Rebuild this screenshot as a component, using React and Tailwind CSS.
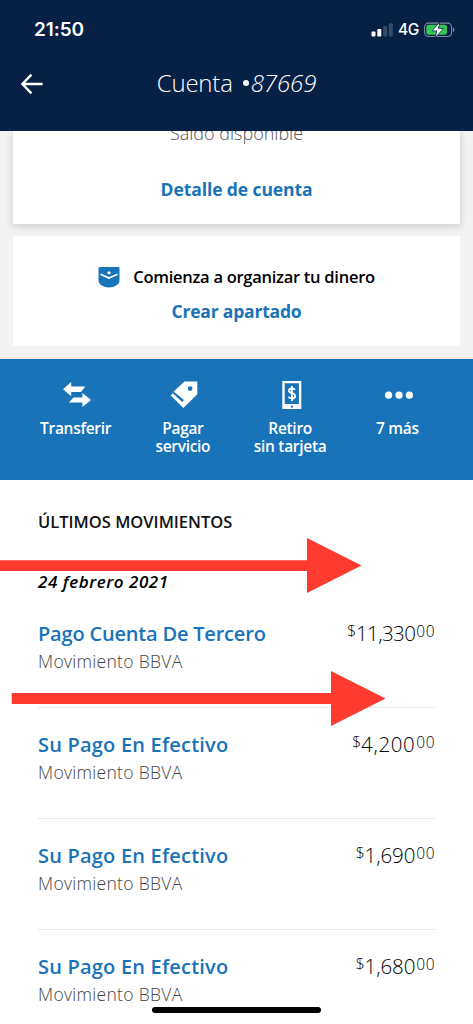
const movements = [
  { title: "Pago Cuenta De Tercero", amount: "11,330", titleClass: "tracking-[-0.19px]", amountClass: "tracking-[-0.6px]" },
  { title: "Su Pago En Efectivo", amount: "4,200", titleClass: "tracking-[0.2px]", amountClass: "tracking-[0.6px]" },
  { title: "Su Pago En Efectivo", amount: "1,690", titleClass: "tracking-[0.2px]", amountClass: "tracking-[-0.1px]" },
  { title: "Su Pago En Efectivo", amount: "1,680", titleClass: "tracking-[0.2px]", amountClass: "tracking-[-0.1px]" },
];

const StatusBar = () => (
  <div className="flex h-[58px] items-center justify-between pt-[2px] pl-[34px] pr-[18px] font-['Inter',sans-serif] text-white">
    <span className="text-[19px] leading-[24px] font-semibold tracking-[-0.1px]">21:50</span>
    <div className="flex items-center">
      <svg width="23" height="14" viewBox="0 0 23 14">
        <rect x="0.5" y="8.5" width="4" height="5" rx="1" fill="#fff" />
        <rect x="6.3" y="6" width="4" height="7.5" rx="1" fill="#fff" />
        <rect x="12.1" y="3" width="4" height="10.5" rx="1" fill="#354a6b" />
        <rect x="17.8" y="0.2" width="4" height="13.3" rx="1" fill="#354a6b" />
      </svg>
      <span className="ml-[4px] w-[22px] text-[15.5px] leading-[20px] font-medium tracking-[-0.4px]">4G</span>
      <svg className="ml-[4px]" width="31" height="18" viewBox="0 0 31 18">
        <rect x="0.6" y="2.1" width="27" height="13.4" rx="4" fill="none" stroke="#7d8b9f" strokeWidth="1.1" />
        <rect x="2.3" y="3.8" width="20.7" height="10" rx="2.4" fill="#35c759" />
        <path d="M29 6.6c1.9.6 1.9 4 0 4.6z" fill="#7d8b9f" />
        <path d="M15.800 .9L8 9.900h4.800l-1.700 7 8.500-9.500h-5.100z" fill="#fff" stroke="#072146" strokeWidth="0.8" />
      </svg>
    </div>
  </div>
);

const Header = () => (
  <header className="relative z-10 h-[131px] bg-[#072146] text-white">
    <StatusBar />
    <div className="grid h-[52px] grid-cols-[1fr_auto_1fr] items-center">
      <svg className="ml-[20px]" width="24" height="22" viewBox="0 0 24 22">
        <path d="M11.4 1.6L2.4 11l9 9.400M3 11h19.600" fill="none" stroke="#fff" strokeWidth="2.4" />
      </svg>
      <h1 className="-mt-[2px] flex h-[32px] items-center text-[24px] font-light leading-[32px]">
        <span className="w-[86px] tracking-[-0.2px]">Cuenta</span>
        <span className="mr-[2px] h-[6px] w-[6px] rounded-full bg-white" />
        <span className="italic tracking-[-0.1px]">87669</span>
      </h1>
      <span />
    </div>
  </header>
);

const SwapIcon = () => (
  <svg width="28" height="28" viewBox="0 0 28 28" fill="#fff">
    <path d="M0 8.300L8.200 1v4.500h14L18 10.900H8.200v4.400z" />
    <path d="M28 18.900L19.400 12v4.400H10.400L6 21.600h13.400v4.400z" />
  </svg>
);

const TagIcon = () => (
  <svg width="28" height="28" viewBox="0 0 28 28" fill="#fff">
    <path
      fillRule="evenodd"
      d="M14.500 .5H27.300V13.300L13.400 27 .7 14.500 2.700 12.300 12.200 21 14 19 3.600 10.500zM20.100 5.200a2.400 2.400 0 1 0 0 4.800 2.400 2.400 0 0 0 0-4.800z"
    />
  </svg>
);

const PhoneIcon = () => (
  <svg width="28" height="28" viewBox="0 0 28 28">
    <path fillRule="evenodd" fill="#fff" d="M4.300 0h19v28h-19zM6.700 2.300v20.800h14.200V2.300z" />
    <circle cx="13.800" cy="25.600" r="1.200" fill="#1973b8" />
    <path
      d="M17 8.800c-.7-1-1.800-1.300-3.100-1.300-1.700 0-2.900.8-2.900 2.300 0 3.300 6.100 1.600 6.100 5.100 0 1.700-1.400 2.500-3.200 2.500-1.400 0-2.600-.5-3.400-1.600M13.900 5v15.200"
      fill="none"
      stroke="#fff"
      strokeWidth="1.900"
    />
  </svg>
);

const DotsIcon = () => (
  <svg width="28" height="28" viewBox="0 0 28 28" fill="#fff">
    <circle cx="3.600" cy="14.200" r="3.600" />
    <circle cx="14" cy="14.200" r="3.600" />
    <circle cx="24.400" cy="14.200" r="3.600" />
  </svg>
);

const Action = ({ icon, children }) => (
  <div className="flex flex-1 flex-col items-center pt-[22px]">
    <div className="ml-[3px]">{icon}</div>
    <span className="mt-[10px] text-center text-[15.5px] font-semibold leading-[18px] tracking-[-0.3px] whitespace-pre-line">
      {children}
    </span>
  </div>
);

const Movement = ({ title, amount, titleClass, amountClass }) => (
  <li className="flex h-[111px] justify-between border-b border-[#e9e9e9] pt-[23px]">
    <div>
      <p className={`text-[20px] font-semibold leading-[28px] text-[#1973b8] ${titleClass}`}>{title}</p>
      <p className="-mt-px text-[17.5px] leading-[28px] font-light tracking-[0.3px] text-[#444]">Movimiento BBVA</p>
    </div>
    <div className="-mt-px flex items-start font-light text-black">
      <span className="text-[15.5px] leading-[25px]">$</span>
      <span className={`text-[20.5px] leading-[28px] ${amountClass}`}>{amount}</span>
      <span className="ml-[1px] text-[15.5px] leading-[25px] tracking-[0.5px]">00</span>
    </div>
  </li>
);

// Red markers that lie over the list
const Markers = () => (
  <svg className="absolute left-0 top-[530px]" width="473" height="200" viewBox="0 530 473 200" fill="#ff3b30">
    <path d="M0 560.200H307V538L361.500 565.500 307 593V571H0z" />
    <path d="M11.700 693H331V671L385.500 698.500 331 726V704H11.700z" />
  </svg>
);

export default function App() {
  return (
    <div className="relative h-[1024px] w-[473px] overflow-hidden bg-white font-['Open_Sans',sans-serif]">
      <Header />
      <section className="h-[228px] overflow-hidden border-b-2 border-[#fbeee6] bg-[#f3f3f3] px-[13px]">
        <div className="flex h-[93px] flex-col bg-white text-center shadow-[0_2px_8px_rgba(0,0,0,0.18)]">
          <p className="-mt-[10px] h-[26px] text-[18px] font-light leading-[24px] text-[#555]">Saldo disponible</p>
          <p className="pt-[30px] text-[17.5px] font-bold leading-[24px] tracking-[-0.1px] text-[#1973b8]">Detalle de cuenta</p>
        </div>
        <div className="mt-[12px] h-[110px] bg-white pt-[29px] text-center">
          <div className="flex h-[24px] items-center justify-center gap-[13px]">
            <svg width="22" height="21" viewBox="0 0 22 21">
              <path d="M1.500 0h19a1 1 0 0 1 1 1v12.500c0 4-5 7-10.500 7S.5 17.500.5 13.500V1a1 1 0 0 1 1-1z" fill="#1973b8" />
              <path d="M2.500 7.200L11 11l8.500-3.800" fill="none" stroke="#fff" strokeWidth="1.7" />
              <circle cx="11" cy="5.800" r="1.600" fill="#fff" />
            </svg>
            <span className="text-[16.5px] font-semibold leading-[24px] tracking-[-0.27px] text-black">
              Comienza a organizar tu dinero
            </span>
          </div>
          <p className="mt-[10px] text-[17.5px] font-bold leading-[24px] tracking-[-0.2px] text-[#1973b8]">Crear apartado</p>
        </div>
      </section>
      <nav className="flex h-[121px] bg-[#1973b8] px-[22px] text-white">
        <Action icon={<SwapIcon />}>Transferir</Action>
        <Action icon={<TagIcon />}>{"Pagar\nservicio"}</Action>
        <Action icon={<PhoneIcon />}>{"Retiro\nsin tarjeta"}</Action>
        <Action icon={<DotsIcon />}>7 más</Action>
      </nav>
      <main className="px-[38px] pt-[30px]">
        <h2 className="text-[16.5px] font-semibold leading-[24px] text-[#111]">ÚLTIMOS MOVIMIENTOS</h2>
        <p className="mt-[36px] text-[17px] font-semibold italic leading-[24px] tracking-[0.55px] text-black">24 febrero 2021</p>
        <ul className="mt-[3px]">
          {movements.map((m, i) => (
            <Movement key={i} {...m} />
          ))}
        </ul>
      </main>
      <Markers />
      <div className="absolute left-[152px] top-[1007px] h-[6px] w-[169px] rounded-full bg-black" />
    </div>
  );
}
